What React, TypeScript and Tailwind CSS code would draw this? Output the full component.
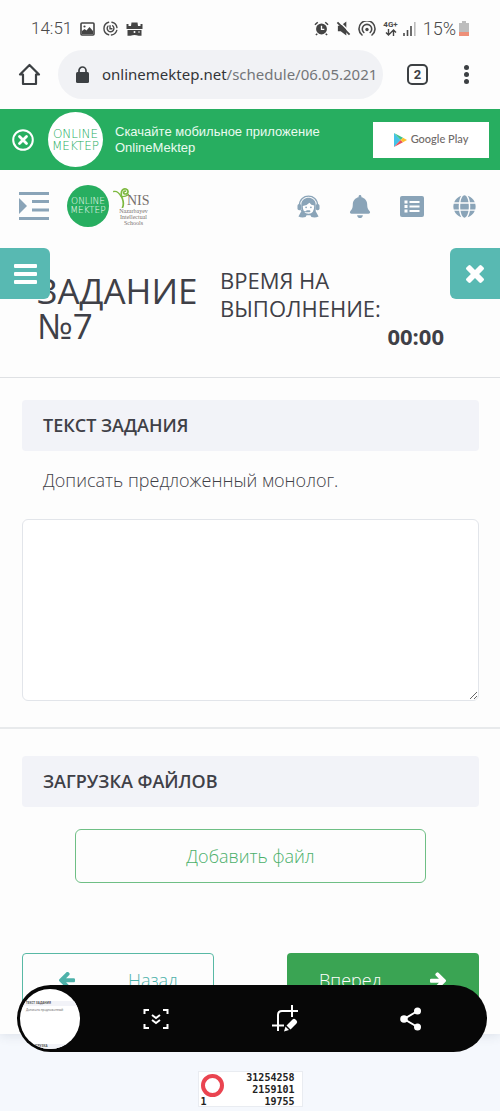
import { FaBell, FaGlobe } from 'react-icons/fa';

const OnlineMektepLogo = ({ inverted = false }: { inverted?: boolean }) => (
  <div
    className={
      inverted
        ? 'flex size-[42px] shrink-0 flex-col items-center justify-center rounded-full bg-[#27ae60] text-[9px] leading-[9px] text-white'
        : 'flex size-[55px] shrink-0 flex-col items-center justify-center rounded-full bg-white text-[12px] leading-[12px] text-[#27ae60]'
    }
    style={{ fontFamily: '"DejaVu Sans", sans-serif', fontWeight: 200 }}
  >
    <span>ONLINE</span>
    <span>MEKTEP</span>
  </div>
);

const ArrowIcon = ({ className }: { className: string }) => (
  <svg viewBox="64 200 1472 1560" className={className} fill="currentColor" aria-hidden="true">
    <path d="M1536 896v128q0 53-32.5 90.5t-84.5 37.5h-704l293 294q38 36 38 90t-38 90l-75 76q-37 37-90 37-52 0-91-37l-651-652q-37-37-37-90 0-52 37-91l651-650q38-38 91-38 52 0 90 38l75 74q38 38 38 91t-38 91l-293 293h704q52 0 84.5 37.5t32.5 90.5z" />
  </svg>
);

const StatusBar = () => (
  <div
    className="flex h-[50px] items-center justify-between pt-[7px] pr-[31px] pl-[31px] text-[17px] text-[#4a4a4a]"
    style={{ fontFamily: 'Roboto, sans-serif', fontWeight: 300 }}
  >
    <div className="flex items-center gap-2">
      <span>14:51</span>
      <svg viewBox="0 0 15 14" className="h-[14px] w-[15px]" aria-hidden="true">
        <rect x="1" y="1" width="13" height="12" rx="1" fill="none" stroke="#444" strokeWidth="1.6" />
        <circle cx="4.5" cy="4.5" r="1.1" fill="#444" />
        <path d="M2 12V9l2.500-2 2 1.500L9.500 5l3.500 4v3z" fill="#444" />
      </svg>
      <svg viewBox="0 0 16 16" className="size-[15px]" fill="none" stroke="#4a4a4a" strokeLinecap="round" aria-hidden="true">
        <path d="M9.500 1.300A7 7 0 0 1 14.900 7M14.700 10A7 7 0 0 1 9 14.900M6 14.700A7 7 0 0 1 6 1.300" strokeWidth="1.500" />
        <path d="M5.300 5.500a3.600 3.600 0 1 0 5-.500M7.500 5v3.200h2" strokeWidth="1.500" />
      </svg>
      <svg viewBox="0 0 17 14" className="h-[14px] w-[17px]" fill="#444" aria-hidden="true">
        <path d="M.500 2h2v2H5l.500-3.500h6L12 4h2.500V2h2v5H.500z" />
        <path d="M1.500 8h14v5.700h-3q-4-1.500-8 0h-3z" />
        <circle cx="8.500" cy="10" r="1" fill="#fff" />
        <path d="M12 10h2" stroke="#fff" strokeWidth=".800" />
      </svg>
    </div>
    <div className="flex items-center gap-[7px]">
      <svg viewBox="0 0 16 16" className="size-[15px]" aria-hidden="true">
        <circle cx="8" cy="8.500" r="5.800" fill="#444" />
        <path d="M1 4 4 1.300M15 4l-3-2.700M3.500 13.500 2 15M12.500 13.500 14 15" stroke="#444" strokeWidth="1.600" />
        <path d="M8 5v4h3" fill="none" stroke="#fff" strokeWidth="1.400" />
      </svg>
      <svg viewBox="0 0 16 16" className="size-[15px]" aria-hidden="true">
        <path d="M2 5h3L11 .500v15L5 11H2z" fill="#444" />
        <path d="m3 0 13 13" stroke="#fff" strokeWidth="1.600" />
        <path d="m1.500 1.500 13 13" stroke="#444" strokeWidth="2" />
      </svg>
      <svg viewBox="0 0 18 15" className="h-[15px] w-[18px]" fill="none" stroke="#4a4a4a" strokeWidth="1.600" strokeLinecap="round" aria-hidden="true">
        <path d="M4 14a8 8 0 1 1 10 0M5.800 11.500a4.700 4.700 0 1 1 6.400 0" />
        <circle cx="9" cy="8.500" r="1.700" fill="#4a4a4a" stroke="none" />
      </svg>
      <div className="flex flex-col items-center">
        <span className="text-[8px] leading-[8px] font-bold">4G+</span>
        <svg viewBox="0 0 12 7" className="h-[7px] w-[12px]" fill="none" stroke="#444" strokeWidth="1.400" aria-hidden="true">
          <path d="M3.500 0v6M1 3.500 3.500 6 6 3.500M8.500 7V1M6 3.500 8.500 1 11 3.500" />
        </svg>
      </div>
      <svg viewBox="0 0 13 14" className="-ml-0.5 h-[14px] w-[13px]" aria-hidden="true">
        <path d="M1 11v3M4.500 8v6M8 4v10" stroke="#4a4a4a" strokeWidth="1.600" />
        <path d="M11.800 0v14" stroke="#bbb" strokeWidth="1.600" />
      </svg>
      <div className="flex items-center gap-[3px]">
        <span className="text-[18px]">15%</span>
        <svg viewBox="0 0 10 15" className="h-[15px] w-[10px]" aria-hidden="true">
          <path d="M3 0h4v2h3v9H0V2h3z" fill="#bdbdbd" />
          <path d="M0 11h10v4H0z" fill="#ee8f78" />
        </svg>
      </div>
    </div>
  </div>
);

const BrowserBar = () => (
  <div className="flex h-[59px] items-start">
    <button aria-label="Home" className="ml-[18px] flex h-[49px] w-[23px] items-center">
      <svg viewBox="0 0 23 23" className="size-[23px]" fill="none" stroke="#3c4043" strokeWidth="2.200" strokeLinejoin="round" aria-hidden="true">
        <path d="M11.500 2 21 11.500h-3V21H5v-9.500H2z" />
      </svg>
    </button>
    <a
      href="#"
      className="ml-[17px] flex h-[49px] min-w-0 flex-1 items-center rounded-full bg-[#f1f2f5] pr-1 pl-[18px]"
      style={{ fontFamily: '"Noto Sans", sans-serif' }}
    >
      <svg viewBox="0 0 13 17" className="h-[17px] w-[13px] shrink-0" aria-hidden="true">
        <rect y="6" width="13" height="11" rx="1.500" fill="#3c4043" />
        <path d="M3 7V4.500a3.500 3.500 0 0 1 7 0V7" fill="none" stroke="#3c4043" strokeWidth="1.700" />
      </svg>
      <span className="ml-[13px] overflow-hidden text-[15px] whitespace-nowrap text-[#747679]">
        <span className="text-[#333538]">onlinemektep.net</span>/schedule/06.05.2021
      </span>
    </a>
    <button
      aria-label="Tabs"
      className="mt-[14px] ml-6 flex size-[21px] items-center justify-center rounded-[5px] border-2 border-[#3c4043] text-[13px] font-bold text-[#3c4043]"
      style={{ fontFamily: 'Roboto, sans-serif' }}
    >
      2
    </button>
    <button aria-label="Menu" className="mr-[31px] ml-[35px] flex h-[49px] w-[6px] flex-col items-center justify-center gap-0.5">
      <span className="size-[5px] rounded-full bg-[#3c4043]" />
      <span className="size-[5px] rounded-full bg-[#3c4043]" />
      <span className="size-[5px] rounded-full bg-[#3c4043]" />
    </button>
  </div>
);

const AppBanner = () => (
  <div className="flex h-[61px] items-center bg-[#27ae60] pr-[11px] pl-3">
    <button aria-label="Закрыть">
      <svg viewBox="0 0 22 22" className="size-[22px]" fill="none" stroke="#fff" aria-hidden="true">
        <circle cx="11" cy="11" r="9.800" strokeWidth="2" />
        <path d="m7.500 7.500 7 7m0-7-7 7" strokeWidth="2.800" strokeLinecap="round" />
      </svg>
    </button>
    <div className="ml-[14px]">
      <OnlineMektepLogo />
    </div>
    <p
      className="ml-3 flex-1 text-[13px] leading-[16px] text-[#eafbf0]"
      style={{ fontFamily: '"Liberation Sans", sans-serif' }}
    >
      Скачайте мобильное приложение
      <br />
      OnlineMektep
    </p>
    <a
      href="#"
      className="flex h-[36px] w-[116px] shrink-0 items-center justify-center gap-1 bg-white text-[11px] font-medium text-[#6f6a68]"
      style={{ fontFamily: 'Lato, sans-serif' }}
    >
      <svg viewBox="0 0 13 14" className="h-[14px] w-[13px]" aria-hidden="true">
        <path d="M0 0v14l6.500-7z" fill="#45c3e8" />
        <path d="m0 0 9 4.700L6.500 7z" fill="#3fc28a" />
        <path d="m0 14 9-4.700L6.500 7z" fill="#e8505b" />
        <path d="m9 4.700 4 2.300-4 2.300L6.500 7z" fill="#fbc02d" />
      </svg>
      Google Play
    </a>
  </div>
);

const SiteHeader = () => (
  <header className="flex items-center pt-[15px] pr-6 pb-[21px] pl-[19px] text-[#8aa4b8]">
    <button aria-label="Меню">
      <svg viewBox="0 0 30 28" className="h-[28px] w-[30px]" fill="currentColor" aria-hidden="true">
        <path d="M0 0h30v3H0zM13 8h17v3H13zM13 16.500h17v3H13zM0 25h30v3H0zM0 6l8 8-8 8z" />
      </svg>
    </button>
    <a href="#" aria-label="Online Mektep" className="ml-[18px]">
      <OnlineMektepLogo inverted />
    </a>
    <a
      href="#"
      className="ml-1 flex w-[37px] flex-col text-[#77706c]"
      style={{ fontFamily: '"Liberation Serif", serif' }}
    >
      <span className="flex items-end">
        <svg viewBox="0 0 18 21" className="h-[21px] w-[18px] shrink-0" fill="none" stroke="#7db93f" strokeLinecap="round" aria-hidden="true">
          <path d="M9.500 20.500C12 15 9 12 8.500 9 7.500 4 10 1 13 2s2.500 5-.500 5-2-3 0-2.800" strokeWidth="1.700" />
          <path d="M.700 4.500Q5 3.500 8 9.500M8.500 9.500q3.500.500 7-2" strokeWidth="1.300" />
        </svg>
        <span className="-ml-1 text-[14px] leading-[14px]">NIS</span>
      </span>
      <span className="pl-1 text-center text-[6px] leading-[6px]">
        Nazarbayev
        <br />
        Intellectual
        <br />
        Schools
      </span>
    </a>
    <nav className="ml-auto flex items-center gap-[29px]">
      <button aria-label="Поддержка">
        <svg viewBox="0 0 24 24" className="size-[23px]" aria-hidden="true">
          <path d="M2.500 11C2.500-2 21.500-2 21.500 11" fill="none" stroke="currentColor" strokeWidth="1.300" />
          <path d="M4.500 10C4.500 .500 19.500 .500 19.500 10v7l3 5.500q-3.500 1.500-7.500.500l-1-2h-4l-1 2q-4 1-7.500-.500l3-5.500z" fill="currentColor" />
          <path d="M6 11.500q4.500-.500 7-3.500 1.500 2.500 5 3 0 8.500-6 8.500t-6-8z" fill="#fff" />
          <rect x=".5" y="9.500" width="4" height="6.500" rx="1.800" fill="currentColor" />
          <rect x="19.500" y="9.500" width="4" height="6.500" rx="1.800" fill="currentColor" />
          <circle cx="9.500" cy="12.800" r=".9" fill="currentColor" />
          <circle cx="14.500" cy="12.800" r=".9" fill="currentColor" />
          <path d="M3.500 15.500q2.500 2.500 7 2" fill="none" stroke="currentColor" strokeWidth="1" />
          <rect x="9.500" y="16" width="4.500" height="2" rx="1" fill="currentColor" />
        </svg>
      </button>
      <button aria-label="Уведомления">
        <FaBell className="h-[23px] w-[22px]" />
      </button>
      <button aria-label="Задания">
        <svg viewBox="0 0 24 21" className="h-[21px] w-[24px]" aria-hidden="true">
          <rect width="24" height="21" rx="2" fill="currentColor" />
          <path d="M4.500 4.500h3v3h-3zM4.500 9h3v3h-3zM4.500 13.500h3v3h-3zM9.500 5h10v2h-10zM9.500 9.500h10v2h-10zM9.500 14h10v2h-10z" fill="#fff" />
        </svg>
      </button>
      <button aria-label="Язык">
        <FaGlobe className="size-[23px]" />
      </button>
    </nav>
  </header>
);

const SectionTitle = ({ children }: { children: string }) => (
  <h2 className="rounded bg-[#f2f3f8] px-[21px] py-3 text-[18px] leading-[27px] font-semibold text-[#3f4047]">
    {children}
  </h2>
);

const ScreenshotToolbar = () => (
  <div className="absolute right-[13px] -bottom-[18px] left-[17px] flex h-[67px] items-center rounded-full bg-[#070707] pl-[3px] text-white">
    <button
      aria-label="Предпросмотр"
      className="flex size-[60px] shrink-0 flex-col overflow-hidden rounded-full bg-white pt-3 text-left text-[3px] leading-[5px] text-[#555]"
    >
      <span className="w-full bg-[#f2f3f8] pl-1.5 font-bold">ТЕКСТ ЗАДАНИЯ</span>
      <span className="pt-0.5 pl-1.5">Дописать предложенный</span>
      <span className="mt-auto bg-[#f2f3f8] pl-3 font-bold">ЗАГРУЗКА</span>
    </button>
    <div className="flex flex-1 items-center justify-between pr-[65px] pl-[63px]">
      <button aria-label="Прокрутка">
        <svg viewBox="0 0 26 22" className="h-[22px] w-[26px]" fill="none" stroke="currentColor" strokeWidth="2" aria-hidden="true">
          <path d="M1.500 6V2H6M20 2h4.500v4M24.500 16v4H20M6 20H1.500v-4M9 7l4 3 4-3M9 12l4 3 4-3" />
        </svg>
      </button>
      <button aria-label="Обрезать">
        <svg viewBox="0 0 26 28" className="h-[28px] w-[26px]" aria-hidden="true">
          <path d="M0 20.500h12M6 26V10q0-4 4-4h16M20 0v12" fill="none" stroke="currentColor" strokeWidth="2" />
          <path d="m12 26.500 1.500-5 3.500 3.500zM14.500 20.500l6-6q1.500-1.500 3 0l1 1q1.500 1.500 0 3l-6 6z" fill="currentColor" />
        </svg>
      </button>
      <button aria-label="Поделиться">
        <svg viewBox="0 0 22 24" className="h-[24px] w-[22px]" fill="currentColor" aria-hidden="true">
          <circle cx="4" cy="12" r="3.800" />
          <circle cx="17.500" cy="4" r="3.500" />
          <circle cx="17.500" cy="20" r="3.500" />
          <path d="m17.500 4-13.500 8 13.500 8" fill="none" stroke="currentColor" strokeWidth="2" />
        </svg>
      </button>
    </div>
  </div>
);

const App = () => {
  return (
    <div
      className="min-h-screen bg-[#f5f8fd] text-[#3f4047]"
      style={{ fontFamily: '"Open Sans", sans-serif' }}
    >
      <div className="relative bg-[#fdfdfd] shadow-[0_2px_10px_rgba(60,70,100,0.12)]">
        <StatusBar />
        <BrowserBar />
        <AppBanner />
        <SiteHeader />

        <div className="relative flex items-start border-b border-[#dfe1e4] pr-14 pb-[27px] pl-[37px]">
          <h1 className="w-[183px] pt-[25px] text-[35px] leading-[35px]">ЗАДАНИЕ №7</h1>
          <div className="flex-1 pt-[18px] text-[22px] leading-[28px]">
            <p>ВРЕМЯ НА ВЫПОЛНЕНИЕ:</p>
            <p className="text-right font-bold">00:00</p>
          </div>
          <button
            aria-label="Список заданий"
            className="absolute top-0 left-0 flex h-[51px] w-[50px] flex-col items-center justify-center gap-1 rounded-r-md bg-[#58b9b2]"
          >
            <span className="h-1 w-[23px] rounded-[1px] bg-white" />
            <span className="h-1 w-[23px] rounded-[1px] bg-white" />
            <span className="h-1 w-[23px] rounded-[1px] bg-white" />
          </button>
          <button
            aria-label="Закрыть задание"
            className="absolute top-0 right-0 flex h-[51px] w-[50px] items-center justify-center rounded-l-md bg-[#58b9b2] text-white"
          >
            <svg viewBox="110 366 1188 1188" className="size-[18px]" fill="currentColor" aria-hidden="true">
              <path d="M1298 1322q0 40-28 68l-136 136q-28 28-68 28t-68-28l-294-294-294 294q-28 28-68 28t-68-28l-136-136q-28-28-28-68t28-68l294-294-294-294q-28-28-28-68t28-68l136-136q28-28 68-28t68 28l294 294 294-294q28-28 68-28t68 28l136 136q28 28 28 68t-28 68l-294 294 294 294q28 28 28 68z" />
            </svg>
          </button>
        </div>

        <section className="border-b-2 border-[#e8eaec] pt-[22px] pr-[21px] pb-[26px] pl-[22px]">
          <SectionTitle>ТЕКСТ ЗАДАНИЯ</SectionTitle>
          <label htmlFor="answer" className="block px-[21px] pt-4 pb-[25px] text-[18px] leading-[27px] font-[330]">
            Дописать предложенный монолог.
          </label>
          <textarea
            id="answer"
            className="block h-[182px] w-full rounded-md border border-[#e2e5ea] bg-white p-3 text-[18px]"
          />
        </section>

        <section className="pt-[27px] pr-[21px] pb-[27px] pl-[22px]">
          <SectionTitle>ЗАГРУЗКА ФАЙЛОВ</SectionTitle>
          <div className="px-[53px] pt-[22px]">
            <button className="h-[54px] w-full rounded-md border border-[#6fbf85] text-[18px] font-[330] text-[#4bb06b]">
              Добавить файл
            </button>
          </div>
          <div className="mt-[70px] flex justify-between text-[18px] font-[330]">
            <button className="flex h-[54px] w-[42%] items-center justify-between rounded border border-[#58b9a5] px-[35px] text-[#4db1a9]">
              <ArrowIcon className="h-[17px] w-[18px]" />
              Назад
            </button>
            <button className="flex h-[54px] w-[42%] items-center justify-between rounded bg-[#3aa453] px-8 text-white">
              Вперед
              <ArrowIcon className="h-[17px] w-[18px] rotate-180" />
            </button>
          </div>
        </section>
        <ScreenshotToolbar />
      </div>

      <div
        className="mx-auto mt-[37px] flex h-[36px] w-[105px] justify-between border border-[#e9ecf1] bg-white pr-[7px] pl-0.5 text-[10px] leading-[12px] font-bold text-[#222]"
        style={{ fontFamily: '"DejaVu Sans Mono", monospace' }}
      >
        <div className="flex flex-col justify-between">
          <span className="mt-0.5 size-[23px] rounded-full border-4 border-[#ea4450]" />
          <span className="leading-[8px]">1</span>
        </div>
        <div className="text-right">
          <p>31254258</p>
          <p>2159101</p>
          <p>19755</p>
        </div>
      </div>
    </div>
  );
};

export default App;
